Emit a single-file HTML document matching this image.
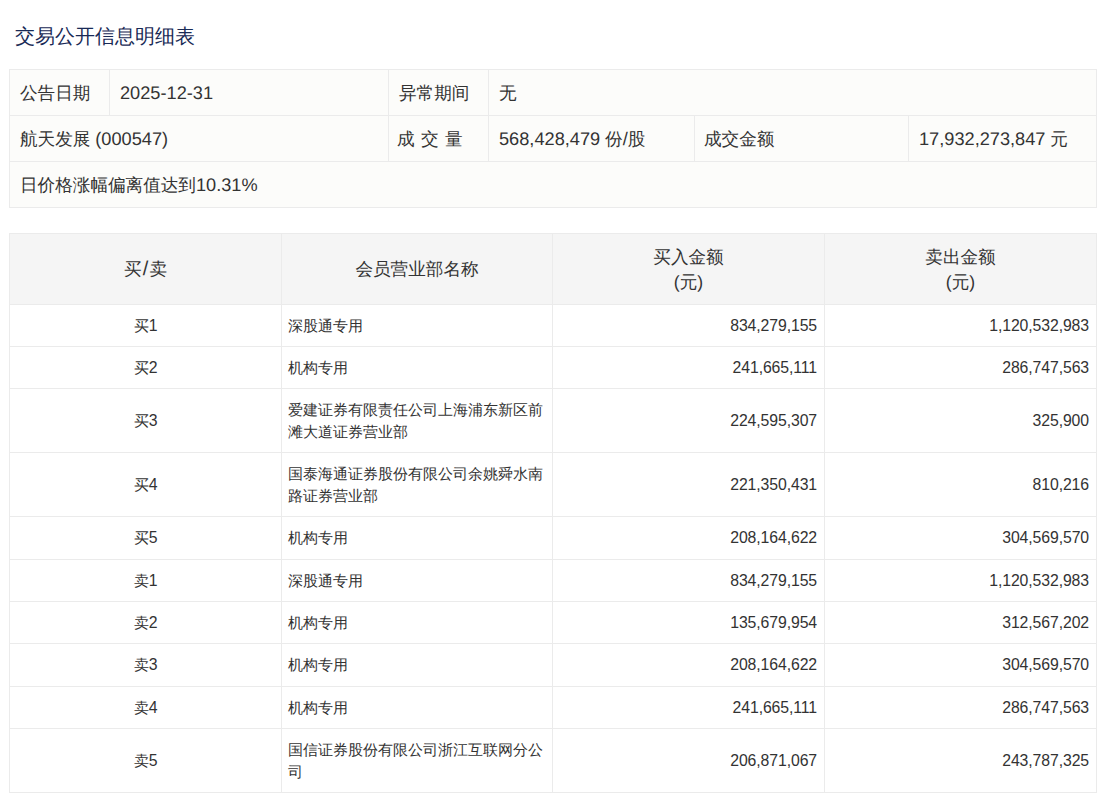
<!DOCTYPE html>
<html><head><meta charset="utf-8"><style>
html,body{margin:0;padding:0;background:#fff;width:1110px;height:806px;overflow:hidden;}
body{position:relative;text-rendering:geometricPrecision;font-family:"Liberation Sans", sans-serif;color:#333;}
.l{position:absolute;}
.c{position:absolute;box-sizing:border-box;display:flex;align-items:center;}
.c span{display:block;}
i{font-style:normal;}
.inf i{font-size:18.2px;}
.hd i{font-size:20px;margin:0 1.2px;}
.dt,.title{text-rendering:auto;}
.dt i{font-size:15.8px;letter-spacing:-0.1px;position:relative;top:0px;}
.title{position:absolute;left:15px;top:21px;font-size:20px;line-height:30px;color:#192a56;white-space:nowrap;}
</style></head><body>
<div class="title">交易公开信息明细表</div>
<div class="l" style="left:9px;top:69px;width:1088px;height:139px;background:#fcfcfa"></div>
<div class="l" style="left:9px;top:69px;width:1088px;height:1px;background:#ebebeb"></div>
<div class="l" style="left:9px;top:115px;width:1088px;height:1px;background:#ebebeb"></div>
<div class="l" style="left:9px;top:161px;width:1088px;height:1px;background:#ebebeb"></div>
<div class="l" style="left:9px;top:207px;width:1088px;height:1px;background:#ebebeb"></div>
<div class="l" style="left:9px;top:69px;width:1px;height:139px;background:#ebebeb"></div>
<div class="l" style="left:1096px;top:69px;width:1px;height:139px;background:#ebebeb"></div>
<div class="l" style="left:109px;top:69px;width:1px;height:46px;background:#ebebeb"></div>
<div class="l" style="left:388px;top:69px;width:1px;height:46px;background:#ebebeb"></div>
<div class="l" style="left:488px;top:69px;width:1px;height:46px;background:#ebebeb"></div>
<div class="l" style="left:388px;top:115px;width:1px;height:46px;background:#ebebeb"></div>
<div class="l" style="left:488px;top:115px;width:1px;height:46px;background:#ebebeb"></div>
<div class="l" style="left:694px;top:115px;width:1px;height:46px;background:#ebebeb"></div>
<div class="l" style="left:908px;top:115px;width:1px;height:46px;background:#ebebeb"></div>
<div class="c inf" style="left:10px;top:71px;width:99px;height:45px;padding:0 10px;font-size:17.6px;justify-content:flex-start;text-align:left;"><span>公告日期</span></div>
<div class="c inf" style="left:110px;top:71px;width:278px;height:45px;padding:0 10px;font-size:17.6px;justify-content:flex-start;text-align:left;"><span><i>2025-12-31</i></span></div>
<div class="c inf" style="left:389px;top:71px;width:99px;height:45px;padding:0 10px;font-size:17.6px;justify-content:flex-start;text-align:left;"><span>异常期间</span></div>
<div class="c inf" style="left:489px;top:71px;width:607px;height:45px;padding:0 10px;font-size:17.6px;justify-content:flex-start;text-align:left;"><span>无</span></div>
<div class="c inf" style="left:10px;top:117px;width:378px;height:45px;padding:0 10px;font-size:17.6px;justify-content:flex-start;text-align:left;"><span>航天发展 <i>(000547)</i></span></div>
<div class="c inf" style="left:389px;top:117px;width:99px;height:45px;padding:0 8px;font-size:17.6px;justify-content:flex-start;text-align:left;word-spacing:1.5px"><span>成 交 量</span></div>
<div class="c inf" style="left:489px;top:117px;width:205px;height:45px;padding:0 10px;font-size:17.6px;justify-content:flex-start;text-align:left;"><span><i>568,428,479</i> 份<i>/</i>股</span></div>
<div class="c inf" style="left:695px;top:117px;width:213px;height:45px;padding:0 9px;font-size:17.6px;justify-content:flex-start;text-align:left;"><span>成交金额</span></div>
<div class="c inf" style="left:909px;top:117px;width:187px;height:45px;padding:0 10px;font-size:17.6px;justify-content:flex-start;text-align:left;"><span><i>17,932,273,847</i> 元</span></div>
<div class="c inf" style="left:10px;top:163px;width:1086px;height:45px;padding:0 10px;font-size:17.6px;justify-content:flex-start;text-align:left;"><span>日价格涨幅偏离值达到<i>10.31%</i></span></div>
<div class="l" style="left:9px;top:233px;width:1088px;height:71px;background:#f5f5f5"></div>
<div class="l" style="left:9px;top:233px;width:1088px;height:1px;background:#ebebeb"></div>
<div class="l" style="left:9px;top:304px;width:1088px;height:1px;background:#ebebeb"></div>
<div class="l" style="left:9px;top:346px;width:1088px;height:1px;background:#ebebeb"></div>
<div class="l" style="left:9px;top:388px;width:1088px;height:1px;background:#ebebeb"></div>
<div class="l" style="left:9px;top:452px;width:1088px;height:1px;background:#ebebeb"></div>
<div class="l" style="left:9px;top:516px;width:1088px;height:1px;background:#ebebeb"></div>
<div class="l" style="left:9px;top:559px;width:1088px;height:1px;background:#ebebeb"></div>
<div class="l" style="left:9px;top:601px;width:1088px;height:1px;background:#ebebeb"></div>
<div class="l" style="left:9px;top:643px;width:1088px;height:1px;background:#ebebeb"></div>
<div class="l" style="left:9px;top:686px;width:1088px;height:1px;background:#ebebeb"></div>
<div class="l" style="left:9px;top:728px;width:1088px;height:1px;background:#ebebeb"></div>
<div class="l" style="left:9px;top:792px;width:1088px;height:1px;background:#ebebeb"></div>
<div class="l" style="left:9px;top:233px;width:1px;height:560px;background:#ebebeb"></div>
<div class="l" style="left:281px;top:233px;width:1px;height:560px;background:#ebebeb"></div>
<div class="l" style="left:552px;top:233px;width:1px;height:560px;background:#ebebeb"></div>
<div class="l" style="left:824px;top:233px;width:1px;height:560px;background:#ebebeb"></div>
<div class="l" style="left:1096px;top:233px;width:1px;height:560px;background:#ebebeb"></div>
<div class="c hd" style="left:10px;top:234.5px;width:271px;height:70px;padding:0 10px;font-size:17.6px;line-height:25px;justify-content:center;text-align:center;"><span>买<i>/</i>卖</span></div>
<div class="c hd" style="left:282px;top:234.5px;width:270px;height:70px;padding:0 10px;font-size:17.6px;line-height:25px;justify-content:center;text-align:center;"><span>会员营业部名称</span></div>
<div class="c hd" style="left:553px;top:234.5px;width:271px;height:70px;padding:0 10px;font-size:17.6px;line-height:25px;justify-content:center;text-align:center;"><span>买入金额<br>(元)</span></div>
<div class="c hd" style="left:825px;top:234.5px;width:271px;height:70px;padding:0 10px;font-size:17.6px;line-height:25px;justify-content:center;text-align:center;"><span>卖出金额<br>(元)</span></div>
<div class="c dt" style="left:10px;top:305px;width:271px;height:41px;padding:0 7px;font-size:15px;line-height:22px;justify-content:center;text-align:center;"><span>买<i>1</i></span></div>
<div class="c dt" style="left:282px;top:305px;width:270px;height:41px;padding:0 6px;font-size:15px;line-height:22px;justify-content:flex-start;text-align:left;"><span>深股通专用</span></div>
<div class="c dt" style="left:553px;top:305px;width:271px;height:41px;padding:0 7px;font-size:15px;line-height:22px;justify-content:flex-end;text-align:right;"><span><i>834,279,155</i></span></div>
<div class="c dt" style="left:825px;top:305px;width:271px;height:41px;padding:0 7px;font-size:15px;line-height:22px;justify-content:flex-end;text-align:right;"><span><i>1,120,532,983</i></span></div>
<div class="c dt" style="left:10px;top:347px;width:271px;height:41px;padding:0 7px;font-size:15px;line-height:22px;justify-content:center;text-align:center;"><span>买<i>2</i></span></div>
<div class="c dt" style="left:282px;top:347px;width:270px;height:41px;padding:0 6px;font-size:15px;line-height:22px;justify-content:flex-start;text-align:left;"><span>机构专用</span></div>
<div class="c dt" style="left:553px;top:347px;width:271px;height:41px;padding:0 7px;font-size:15px;line-height:22px;justify-content:flex-end;text-align:right;"><span><i>241,665,111</i></span></div>
<div class="c dt" style="left:825px;top:347px;width:271px;height:41px;padding:0 7px;font-size:15px;line-height:22px;justify-content:flex-end;text-align:right;"><span><i>286,747,563</i></span></div>
<div class="c dt" style="left:10px;top:389px;width:271px;height:63px;padding:0 7px;font-size:15px;line-height:22px;justify-content:center;text-align:center;"><span>买<i>3</i></span></div>
<div class="c dt" style="left:282px;top:389px;width:270px;height:63px;padding:0 6px;font-size:15px;line-height:22px;justify-content:flex-start;text-align:left;"><span>爱建证券有限责任公司上海浦东新区前滩大道证券营业部</span></div>
<div class="c dt" style="left:553px;top:389px;width:271px;height:63px;padding:0 7px;font-size:15px;line-height:22px;justify-content:flex-end;text-align:right;"><span><i>224,595,307</i></span></div>
<div class="c dt" style="left:825px;top:389px;width:271px;height:63px;padding:0 7px;font-size:15px;line-height:22px;justify-content:flex-end;text-align:right;"><span><i>325,900</i></span></div>
<div class="c dt" style="left:10px;top:453px;width:271px;height:63px;padding:0 7px;font-size:15px;line-height:22px;justify-content:center;text-align:center;"><span>买<i>4</i></span></div>
<div class="c dt" style="left:282px;top:453px;width:270px;height:63px;padding:0 6px;font-size:15px;line-height:22px;justify-content:flex-start;text-align:left;"><span>国泰海通证券股份有限公司余姚舜水南路证券营业部</span></div>
<div class="c dt" style="left:553px;top:453px;width:271px;height:63px;padding:0 7px;font-size:15px;line-height:22px;justify-content:flex-end;text-align:right;"><span><i>221,350,431</i></span></div>
<div class="c dt" style="left:825px;top:453px;width:271px;height:63px;padding:0 7px;font-size:15px;line-height:22px;justify-content:flex-end;text-align:right;"><span><i>810,216</i></span></div>
<div class="c dt" style="left:10px;top:517px;width:271px;height:42px;padding:0 7px;font-size:15px;line-height:22px;justify-content:center;text-align:center;"><span>买<i>5</i></span></div>
<div class="c dt" style="left:282px;top:517px;width:270px;height:42px;padding:0 6px;font-size:15px;line-height:22px;justify-content:flex-start;text-align:left;"><span>机构专用</span></div>
<div class="c dt" style="left:553px;top:517px;width:271px;height:42px;padding:0 7px;font-size:15px;line-height:22px;justify-content:flex-end;text-align:right;"><span><i>208,164,622</i></span></div>
<div class="c dt" style="left:825px;top:517px;width:271px;height:42px;padding:0 7px;font-size:15px;line-height:22px;justify-content:flex-end;text-align:right;"><span><i>304,569,570</i></span></div>
<div class="c dt" style="left:10px;top:560px;width:271px;height:41px;padding:0 7px;font-size:15px;line-height:22px;justify-content:center;text-align:center;"><span>卖<i>1</i></span></div>
<div class="c dt" style="left:282px;top:560px;width:270px;height:41px;padding:0 6px;font-size:15px;line-height:22px;justify-content:flex-start;text-align:left;"><span>深股通专用</span></div>
<div class="c dt" style="left:553px;top:560px;width:271px;height:41px;padding:0 7px;font-size:15px;line-height:22px;justify-content:flex-end;text-align:right;"><span><i>834,279,155</i></span></div>
<div class="c dt" style="left:825px;top:560px;width:271px;height:41px;padding:0 7px;font-size:15px;line-height:22px;justify-content:flex-end;text-align:right;"><span><i>1,120,532,983</i></span></div>
<div class="c dt" style="left:10px;top:602px;width:271px;height:41px;padding:0 7px;font-size:15px;line-height:22px;justify-content:center;text-align:center;"><span>卖<i>2</i></span></div>
<div class="c dt" style="left:282px;top:602px;width:270px;height:41px;padding:0 6px;font-size:15px;line-height:22px;justify-content:flex-start;text-align:left;"><span>机构专用</span></div>
<div class="c dt" style="left:553px;top:602px;width:271px;height:41px;padding:0 7px;font-size:15px;line-height:22px;justify-content:flex-end;text-align:right;"><span><i>135,679,954</i></span></div>
<div class="c dt" style="left:825px;top:602px;width:271px;height:41px;padding:0 7px;font-size:15px;line-height:22px;justify-content:flex-end;text-align:right;"><span><i>312,567,202</i></span></div>
<div class="c dt" style="left:10px;top:644px;width:271px;height:42px;padding:0 7px;font-size:15px;line-height:22px;justify-content:center;text-align:center;"><span>卖<i>3</i></span></div>
<div class="c dt" style="left:282px;top:644px;width:270px;height:42px;padding:0 6px;font-size:15px;line-height:22px;justify-content:flex-start;text-align:left;"><span>机构专用</span></div>
<div class="c dt" style="left:553px;top:644px;width:271px;height:42px;padding:0 7px;font-size:15px;line-height:22px;justify-content:flex-end;text-align:right;"><span><i>208,164,622</i></span></div>
<div class="c dt" style="left:825px;top:644px;width:271px;height:42px;padding:0 7px;font-size:15px;line-height:22px;justify-content:flex-end;text-align:right;"><span><i>304,569,570</i></span></div>
<div class="c dt" style="left:10px;top:687px;width:271px;height:41px;padding:0 7px;font-size:15px;line-height:22px;justify-content:center;text-align:center;"><span>卖<i>4</i></span></div>
<div class="c dt" style="left:282px;top:687px;width:270px;height:41px;padding:0 6px;font-size:15px;line-height:22px;justify-content:flex-start;text-align:left;"><span>机构专用</span></div>
<div class="c dt" style="left:553px;top:687px;width:271px;height:41px;padding:0 7px;font-size:15px;line-height:22px;justify-content:flex-end;text-align:right;"><span><i>241,665,111</i></span></div>
<div class="c dt" style="left:825px;top:687px;width:271px;height:41px;padding:0 7px;font-size:15px;line-height:22px;justify-content:flex-end;text-align:right;"><span><i>286,747,563</i></span></div>
<div class="c dt" style="left:10px;top:729px;width:271px;height:63px;padding:0 7px;font-size:15px;line-height:22px;justify-content:center;text-align:center;"><span>卖<i>5</i></span></div>
<div class="c dt" style="left:282px;top:729px;width:270px;height:63px;padding:0 6px;font-size:15px;line-height:22px;justify-content:flex-start;text-align:left;"><span>国信证券股份有限公司浙江互联网分公司</span></div>
<div class="c dt" style="left:553px;top:729px;width:271px;height:63px;padding:0 7px;font-size:15px;line-height:22px;justify-content:flex-end;text-align:right;"><span><i>206,871,067</i></span></div>
<div class="c dt" style="left:825px;top:729px;width:271px;height:63px;padding:0 7px;font-size:15px;line-height:22px;justify-content:flex-end;text-align:right;"><span><i>243,787,325</i></span></div>
</body></html>
